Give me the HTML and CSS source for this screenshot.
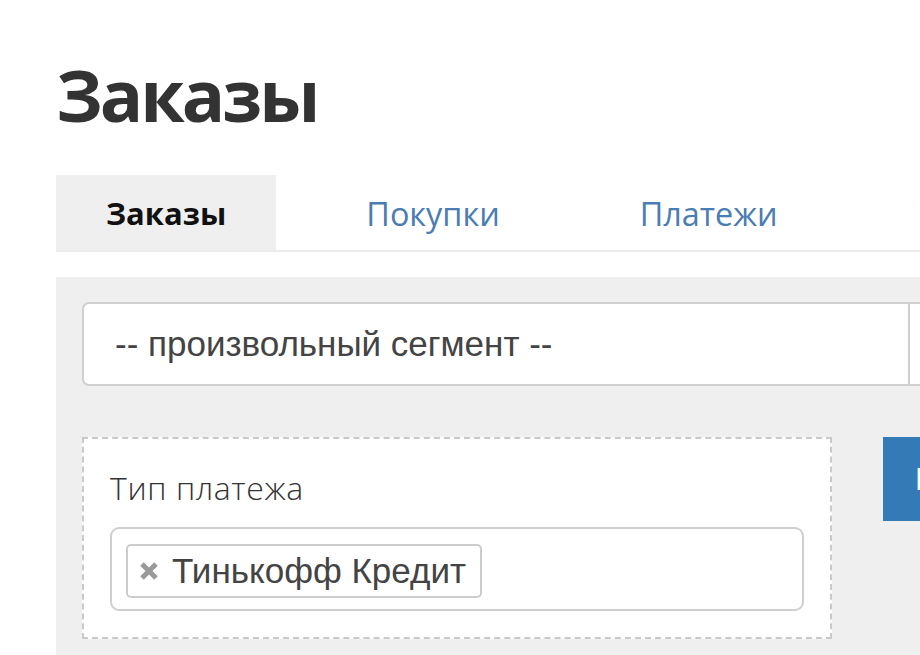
FILE: index.html
```html
<!DOCTYPE html>
<html lang="ru">
<head>
<meta charset="utf-8">
<title>Заказы</title>
<link rel="stylesheet" href="styles.css">
</head>
<body>
<div class="page">
  <h1 class="title">Заказы</h1>
  <nav class="tabs">
    <a class="tab active">Заказы</a>
    <a class="tab">Покупки</a>
    <a class="tab">Платежи</a>
    <a class="tab">Чеки</a>
  </nav>
  <div class="panel">
    <div class="segment">
      <div class="segment-select">-- произвольный сегмент --</div>
      <div class="segment-addon"></div>
    </div>
    <div class="filters">
      <div class="filter-box">
        <div class="filter-label">Тип платежа</div>
        <div class="multi">
          <span class="chip"><svg class="chip-x" width="20" height="20" viewBox="0 0 20 20" aria-hidden="true"><path d="M3 3 L17 17 M17 3 L3 17" stroke="#999999" stroke-width="5" stroke-linecap="butt"/></svg>Тинькофф Кредит</span>
        </div>
      </div>
      <button class="btn">Выбрать</button>
    </div>
  </div>
</div>
</body>
</html>
```
FILE: styles.css
```css
html, body {
  margin: 0;
  padding: 0;
  background: #ffffff;
}
body {
  font-family: "Open Sans", "Liberation Sans", sans-serif;
  color: #333333;
  overflow: hidden;
}
.page {
  padding-left: 56px;
  width: 1100px;
}
.title {
  margin: 0;
  padding-top: 50px;
  height: 175px;
  box-sizing: border-box;
  font-size: 72px;
  line-height: 88px;
  font-weight: 700;
  color: #333333;
  letter-spacing: -3px;
}
.tabs {
  display: flex;
  gap: 40px;
  height: 75px;
  border-bottom: 2px solid #ececec;
}
.tab {
  padding: 0 50px;
  display: flex;
  align-items: center;
  font-size: 32.4px;
  color: #4a7db1;
  white-space: nowrap;
}
.tab.active {
  background: #efefef;
  color: #111111;
  font-weight: 700;
  font-size: 31px;
}
.panel {
  margin-top: 25px;
  background: #efefef;
  padding: 25px 26px 40px;
  height: 400px;
}
.segment {
  display: flex;
  height: 84px;
  box-sizing: border-box;
  border: 2px solid #cfcfcf;
  border-radius: 7px 0 0 7px;
  background: #ffffff;
}
.segment-select {
  width: 826px;
  flex: none;
  box-sizing: border-box;
  padding-left: 31px;
  display: flex;
  align-items: center;
  font-family: "Liberation Sans", Arial, sans-serif;
  font-size: 35px;
  color: #444444;
  border-right: 2px solid #cfcfcf;
}
.segment-addon {
  flex: 1;
}
.filters {
  display: flex;
  align-items: flex-start;
  gap: 51px;
  margin-top: 51px;
}
.filter-box {
  width: 750px;
  box-sizing: border-box;
  border: 2px dashed #c9c9c9;
  background: #ffffff;
  padding: 30px 26px 26px;
}
.filter-label {
  font-size: 32px;
  font-weight: 300;
  line-height: 38px;
  letter-spacing: 0.6px;
  color: #333333;
  margin-bottom: 20px;
}
.multi {
  height: 84px;
  box-sizing: border-box;
  border: 2px solid #cfcfcf;
  border-radius: 9px;
  padding: 15px 14px;
}
.chip {
  display: inline-flex;
  align-items: center;
  height: 54px;
  box-sizing: border-box;
  border: 2px solid #cccccc;
  border-radius: 5px;
  padding: 0 14px 0 11px;
  font-family: "Liberation Sans", Arial, sans-serif;
  font-size: 35px;
  color: #444444;
}
.chip-x {
  flex: none;
  margin-right: 13px;
}
.btn {
  width: 200px;
  height: 84px;
  border: none;
  background: #337ab7;
  color: #ffffff;
  font-family: "Liberation Sans", Arial, sans-serif;
  font-size: 32px;
  text-align: left;
  padding-left: 32px;
}
```
